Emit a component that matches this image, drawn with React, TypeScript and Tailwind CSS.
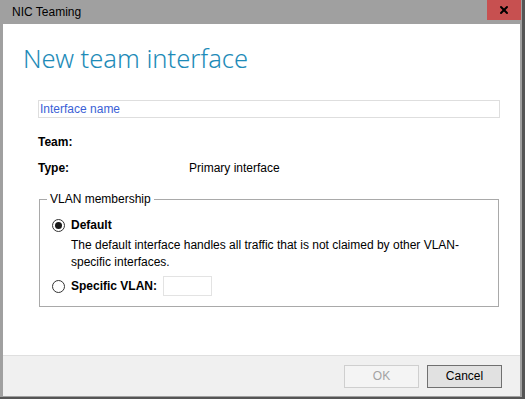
import { X } from "lucide-react";

export default function App() {
  return (
    <div
      className="relative flex h-[399px] w-[525px] flex-col overflow-hidden bg-[#a0a0a0] text-[12px] text-[#000]"
      style={{ fontFamily: '"Liberation Sans", Arial, sans-serif' }}
    >
      {/* title bar */}
      <div className="flex h-[24px] shrink-0 items-center pl-[12px] text-[12px] text-black">
        NIC Teaming
      </div>
      <div className="absolute right-[4px] top-0 flex h-[20px] w-[34px] items-center justify-center bg-[#c75050]">
        <X size={12} strokeWidth={4} className="text-black" />
      </div>

      <div className="ml-[3px] flex w-[517px] flex-1 flex-col border-b-[3px] border-[#a0a0a0]">
        {/* main */}
        <div className="flex flex-1 flex-col bg-white pl-[20px] pr-[20px]">
          <h1
            className="mt-[17px] text-[25.5px] font-light leading-[34px] text-[#1e8bb8]"
            style={{ fontFamily: '"Noto Sans", sans-serif' }}
          >
            New team interface
          </h1>

          <div className="ml-[15px] mt-[25px] flex h-[18px] items-center border border-[#dedede] pl-[1px] text-[#3b5fd6]">
            Interface name
          </div>

          <div className="ml-[15px] mt-[16px] flex h-[16px] items-center font-bold">
            Team:
          </div>
          <div className="ml-[15px] mt-[10px] flex h-[16px] items-center">
            <span className="w-[151px] font-bold">Type:</span>
            <span>Primary interface</span>
          </div>

          <fieldset className="ml-[16px] mr-[1px] mt-[16px] h-[115px] border border-[#a9a9a9] px-[12px] pb-0 pt-0">
            <legend className="-ml-[5px] px-[3px] leading-[14px]">VLAN membership</legend>
            <label className="mt-[10px] flex items-center gap-[6px] font-bold">
              <span className="flex h-[13px] w-[13px] items-center justify-center rounded-full border border-[#333]">
                <span className="h-[7px] w-[7px] rounded-full bg-[#1a1a1a]" />
              </span>
              Default
            </label>
            <p className="ml-[19px] mt-[3px] leading-[17px]">
              The default interface handles all traffic that is not claimed by other VLAN-
              <br />
              specific interfaces.
            </p>
            <label className="mt-[5px] flex items-center gap-[6px] font-bold">
              <span className="h-[13px] w-[13px] rounded-full border border-[#333]" />
              Specific VLAN:
              <span className="h-[20px] w-[49px] border border-[#e3e3e3] bg-white" />
            </label>
          </fieldset>
        </div>

        {/* footer */}
        <div className="flex h-[41px] shrink-0 items-center justify-end gap-[8px] border-t border-[#dfdfdf] bg-[#f0f0f0] pr-[18px]">
          <button className="h-[23px] w-[75px] border border-[#cfcfcf] bg-[#f4f4f4] text-[#a3a3a3]">
            OK
          </button>
          <button className="h-[23px] w-[75px] border border-[#707070] bg-[#e1e1e1] text-black">
            Cancel
          </button>
        </div>
      </div>
      <div className="absolute bottom-0 right-0 top-0 w-[3px] bg-[#555]" />
      <div className="absolute bottom-0 left-0 right-0 h-[2px] bg-[#555]" />
    </div>
  );
}
